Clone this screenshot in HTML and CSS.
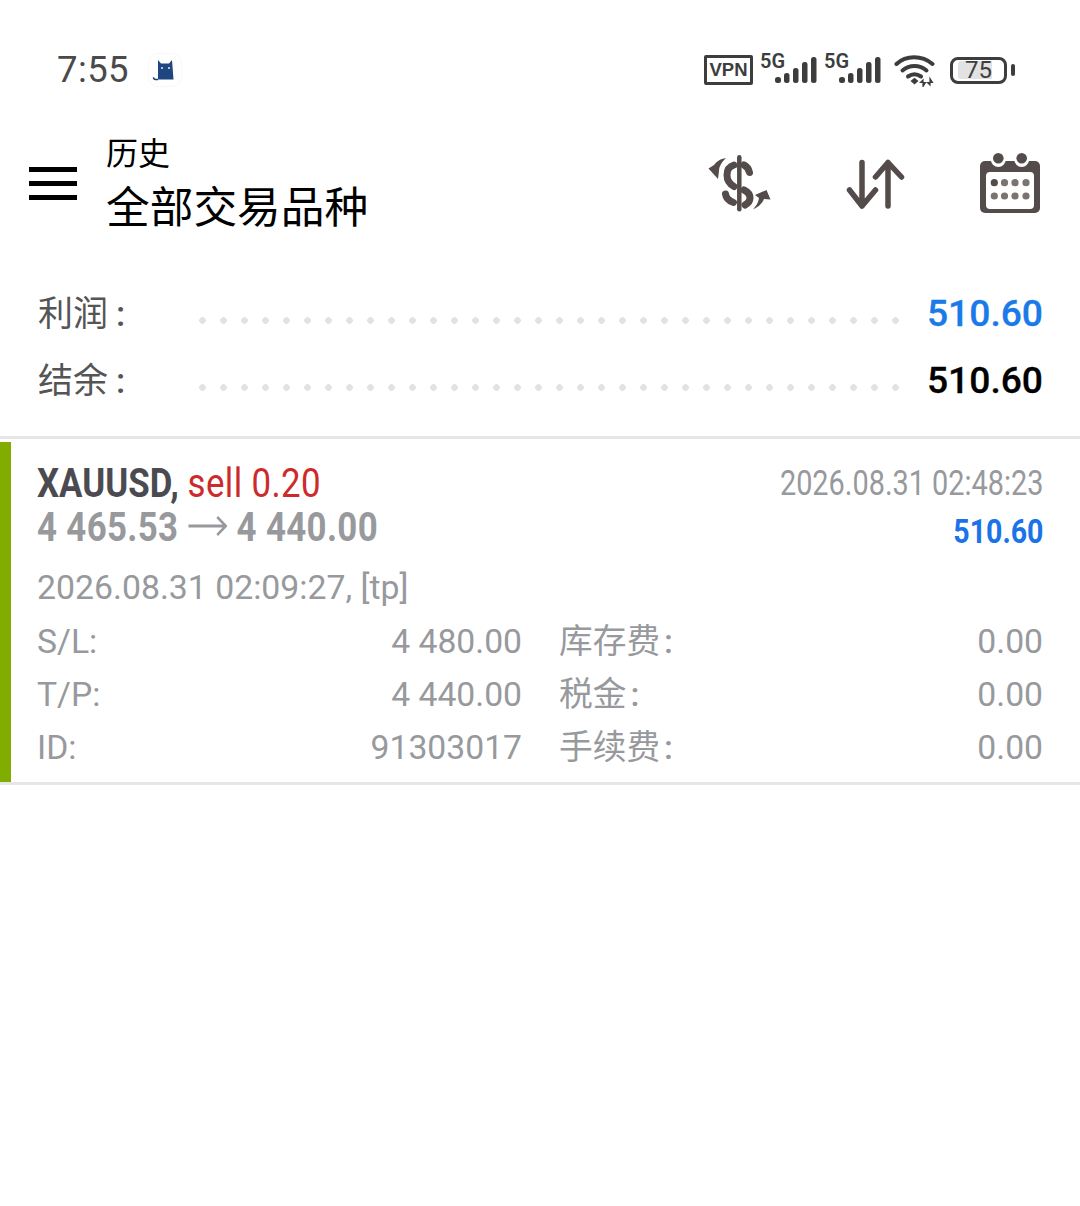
FILE: index.html
```html
<!DOCTYPE html>
<html lang="zh">
<head>
<meta charset="utf-8">
<title>历史</title>
<link rel="stylesheet" href="styles.css">
</head>
<body>
<div class="status">
  <div class="status-left">
    <span class="clock">7:55</span>
    <svg class="cat" width="34" height="34" viewBox="0 0 34 34"><rect x="0.5" y="0.5" width="33" height="33" rx="9" fill="#fff" stroke="#f8f8f8"/><path d="M10 26.500V7l3 3.500h8L24 7l1.500 19.500z" fill="#1f4680"/><path d="M10 26.500H7.500c-1.300 0-2-.9-2-2.200" fill="none" stroke="#1f4680" stroke-width="1.500"/><circle cx="14" cy="15" r="1" fill="#dfe8f4"/><circle cx="21" cy="15" r="1" fill="#dfe8f4"/></svg>
  </div>
  <div class="status-right">
    <span class="vpn">VPN</span>
    <span class="signal"><span class="fiveg">5G</span><svg width="42" height="28" viewBox="0 0 42 28"><g fill="#3d3d3d"><rect x="0" y="21" width="6" height="6" rx="2.500"/><rect x="9" y="17" width="5.500" height="10" rx="2.500"/><rect x="18" y="12" width="5.500" height="15" rx="2.500"/><rect x="27" y="6" width="5.500" height="21" rx="2.500"/><rect x="36" y="1" width="5.500" height="26" rx="2.500"/></g></svg></span>
    <span class="signal"><span class="fiveg">5G</span><svg width="42" height="28" viewBox="0 0 42 28"><g fill="#3d3d3d"><rect x="0" y="21" width="6" height="6" rx="2.500"/><rect x="9" y="17" width="5.500" height="10" rx="2.500"/><rect x="18" y="12" width="5.500" height="15" rx="2.500"/><rect x="27" y="6" width="5.500" height="21" rx="2.500"/><rect x="36" y="1" width="5.500" height="26" rx="2.500"/></g></svg></span>
    <svg class="wifi" width="44" height="34" viewBox="0 0 44 34"><g fill="none" stroke="#3d3d3d" stroke-width="4" stroke-linecap="round"><path d="M2.500 11C12 2 28 2 38.500 11"/><path d="M8.500 17.500c7-6 17-6 24 0"/><path d="M14 23.500c4-2.800 9-2.800 13 0"/></g><path d="M16.500 28l4-3.200 4 3.200-4 3.500z" fill="#3d3d3d"/><path d="M29 33.500V27l-2.500 2.500h5zM36 25.500V32l-2.500-2.500h5z" fill="#3d3d3d" stroke="#3d3d3d" stroke-width="1.200"/></svg>
    <span class="battery"><span class="battery-body"><span class="battery-level">75</span></span><span class="battery-cap"></span></span>
  </div>
</div>

<header class="toolbar">
  <div class="burger"><span></span><span></span><span></span></div>
  <div class="titles">
    <div class="title-small">历史</div>
    <div class="title-big">全部交易品种</div>
  </div>
  <div class="actions">
    <svg width="66" height="58" viewBox="0 0 66 58"><path d="M33.300 3.300v52" fill="none" stroke="#544c4a" stroke-width="4.500" stroke-linecap="round"/><g fill="none" stroke="#544c4a" stroke-width="7" stroke-linecap="round"><path d="M43.500 18.500C42.500 14 40 12 38 11"/><path d="M28 11c-5 1.500-7 5-7 10 0 5 2.500 9 7 11.500"/><path d="M38 36c4 2 6 4 6 8 0 3-2 5.500-5 7"/><path d="M19.500 40c.5 4 3.500 7 8 8.500"/></g><path d="M20 4C14 5 10 8 8 11l-5.500 3.500 9.500 10.500 1-8C13 12 16 8 20 4zM47 55.500C52 53 56 50 58 45l6.500.5-4-9.500L49 41l4 3c-.5 4.500-3 8-6 11.500z" fill="#544c4a"/></svg>
    <svg width="60" height="52" viewBox="0 0 60 52"><g fill="none" stroke="#544c4a" stroke-width="5.500" stroke-linecap="round" stroke-linejoin="round"><path d="M16 5.500V49M3.500 33L16 49l13.500-16"/><path d="M42 49V5.500M29.500 20L42 5.500 55.500 20"/></g></svg>
    <svg width="60" height="60" viewBox="0 0 60 60"><rect x="0" y="8" width="60" height="52" rx="5" fill="#544c4a"/><circle cx="18.300" cy="6.500" r="7.500" fill="#fff"/><circle cx="41.700" cy="6.500" r="7.500" fill="#fff"/><circle cx="18.300" cy="5.300" r="5.300" fill="#544c4a"/><circle cx="41.700" cy="5.300" r="5.300" fill="#544c4a"/><rect x="6" y="19" width="48" height="37" rx="4" fill="#fff"/><g fill="#7a7370"><circle cx="14.300" cy="29.700" r="3.600" fill="#544c4a"/><circle cx="24.500" cy="29.700" r="3.600"/><circle cx="35" cy="29.700" r="3.600"/><circle cx="46" cy="29.700" r="3.600"/><circle cx="14.300" cy="43" r="3.600"/><circle cx="24.500" cy="43" r="3.600"/><circle cx="35" cy="43" r="3.600"/><circle cx="46" cy="43" r="3.600"/></g></svg>
  </div>
</header>

<section class="summary">
  <div class="sum-row"><span class="sum-label">利润<span class="colon">:</span></span><span class="dots"></span><span class="sum-value blue">510.60</span></div>
  <div class="sum-row"><span class="sum-label">结余<span class="colon">:</span></span><span class="dots"></span><span class="sum-value">510.60</span></div>
</section>

<article class="trade">
  <div class="trade-inner">
    <div class="trade-top">
      <div class="trade-main">
        <div class="cond line1"><b>XAUUSD,</b> <span class="red">sell 0.20</span></div>
        <div class="cond line2"><b>4 465.53</b> <svg class="arrow" width="46" height="24" viewBox="0 0 46 24"><path d="M0 12H44M34 3l10 9-10 9" fill="none" stroke="#97999d" stroke-width="3"/></svg> <b>4 440.00</b></div>
      </div>
      <div class="trade-side">
        <div class="cond date">2026.08.31 02:48:23</div>
        <div class="cond profit">510.60</div>
      </div>
    </div>
    <div class="open-line">2026.08.31 02:09:27, [tp]</div>
    <div class="grid">
      <span>S/L:</span><span class="num">4 480.00</span><span class="cjk">库存费<span class="colon">:</span></span><span class="num">0.00</span>
      <span>T/P:</span><span class="num">4 440.00</span><span class="cjk">税金<span class="colon">:</span></span><span class="num">0.00</span>
      <span>ID:</span><span class="num">91303017</span><span class="cjk">手续费<span class="colon">:</span></span><span class="num">0.00</span>
    </div>
  </div>
</article>
</body>
</html>
```

FILE: styles.css
```css
* { box-sizing: border-box; }
html, body { margin: 0; padding: 0; background: #fff; }
body { width: 1080px; height: 1206px; overflow: hidden; font-family: Roboto, "Noto Sans CJK SC", sans-serif; }

.status { height: 120px; padding: 50px 65px 0 57px; display: flex; justify-content: space-between; align-items: flex-start; }
.status-left { display: flex; align-items: center; gap: 19px; height: 40px; }
.clock { font-size: 36.500px; color: #4a4a4a; letter-spacing: .4px; line-height: 40px; }
.status-right { display: flex; align-items: center; height: 40px; }
.vpn { width: 49px; height: 30px; margin-top: -1px; border: 3.500px solid #3d3d3d; border-radius: 2px; font: bold 18.500px/23px "Liberation Sans", sans-serif; color: #3d3d3d; text-align: center; }
.signal { position: relative; width: 64px; height: 32px; display: flex; justify-content: flex-end; align-items: flex-start; }
.signal svg { margin-top: 2px; }
.fiveg { position: absolute; left: 7px; top: -3px; font: 600 20px/20px Roboto, sans-serif; color: #3d3d3d; }
.wifi { margin-left: 13px; }
.battery { display: flex; align-items: center; margin-left: 12px; }
.battery-body { width: 57px; height: 27px; border: 3px solid #3d3d3d; border-radius: 8px; padding: 1px 5px; }
.battery-level { display: block; width: 34px; height: 18px; background: #e2e2e2; border-radius: 3px 0 0 3px; color: #3d3d3d; font-size: 24px; line-height: 18px; text-align: right; }
.battery-cap { width: 4px; height: 12px; margin-left: 4px; background: #3d3d3d; border-radius: 2px; }

.toolbar { height: 145px; padding: 0 40px 0 29px; display: flex; align-items: flex-start; }
.burger { width: 48px; height: 33px; margin-top: 47px; display: flex; flex-direction: column; justify-content: space-between; }
.burger span { display: block; height: 5px; background: #000; }
.titles { margin-left: 29px; }
.title-small { font-size: 32px; line-height: 36px; color: #000; margin-top: 16px; }
.title-big { font-size: 43.700px; line-height: 56px; color: #000; margin-top: 8px; }
.actions { margin-left: auto; display: flex; align-items: center; gap: 74px; height: 66px; margin-top: 30px; }

.summary { height: 174px; padding: 14px 37px 0 38px; border-bottom: 3px solid #e6e6e6; }
.sum-row { height: 67px; display: flex; align-items: center; }
.sum-label { width: 161px; font-size: 35px; color: #555; margin-top: -4px; }
.colon { margin-left: 8px; font-weight: 500; }
.dots { flex: 1; height: 7px; margin-top: 15px; background: radial-gradient(circle at 3.500px 3.500px, #e2e2e2 3px, transparent 3.600px) 0 0 / 21px 7px repeat-x; }
.sum-value { width: 141px; text-align: right; font-size: 37.200px; font-weight: 500; color: #000; margin-top: 0; -webkit-text-stroke: .3px currentColor; }
.blue { color: #1a7ae8; }

.trade { height: 343px; margin-top: 3px; border-bottom: 3px solid #e6e6e6; }
.trade-inner { height: 340px; border-left: 11px solid #80ad00; padding: 18px 37px 0 26px; }
.trade-top { display: flex; justify-content: space-between; height: 102px; }
.cond { transform: scaleX(.85); transform-origin: left top; white-space: nowrap; }
.line1 { height: 46px; font-size: 41px; line-height: 46px; color: #4a4a50; }
.line1 b { font-weight: 700; }
.red { color: #cc2b2b; letter-spacing: .45px; }
.line2 { height: 44px; margin-top: -1px; font-size: 41px; line-height: 44px; color: #97999d; }
.line2 b { letter-spacing: .4px; }
.arrow { vertical-align: 3px; margin: 0 1px; }
.trade-side { text-align: right; }
.trade-side .cond { transform-origin: right top; }
.date { font-size: 35px; line-height: 46px; color: #97999d; padding-top: 1px; transform: scaleX(.825); }
.profit { font-size: 34px; line-height: 44px; font-weight: 700; color: #1a73e8; padding-top: 2px; transform: scaleX(.84); }
.open-line { font-size: 33.800px; line-height: 44px; color: #97999d; margin-top: 4px; }
.grid { display: grid; grid-template-columns: 201px 284px 1fr auto; margin-top: 5px; font-size: 33.700px; line-height: 53px; color: #97999d; }
.num { text-align: right; }
.cjk { padding-left: 37px; }
.cjk .colon { margin-left: 4px; }
```
